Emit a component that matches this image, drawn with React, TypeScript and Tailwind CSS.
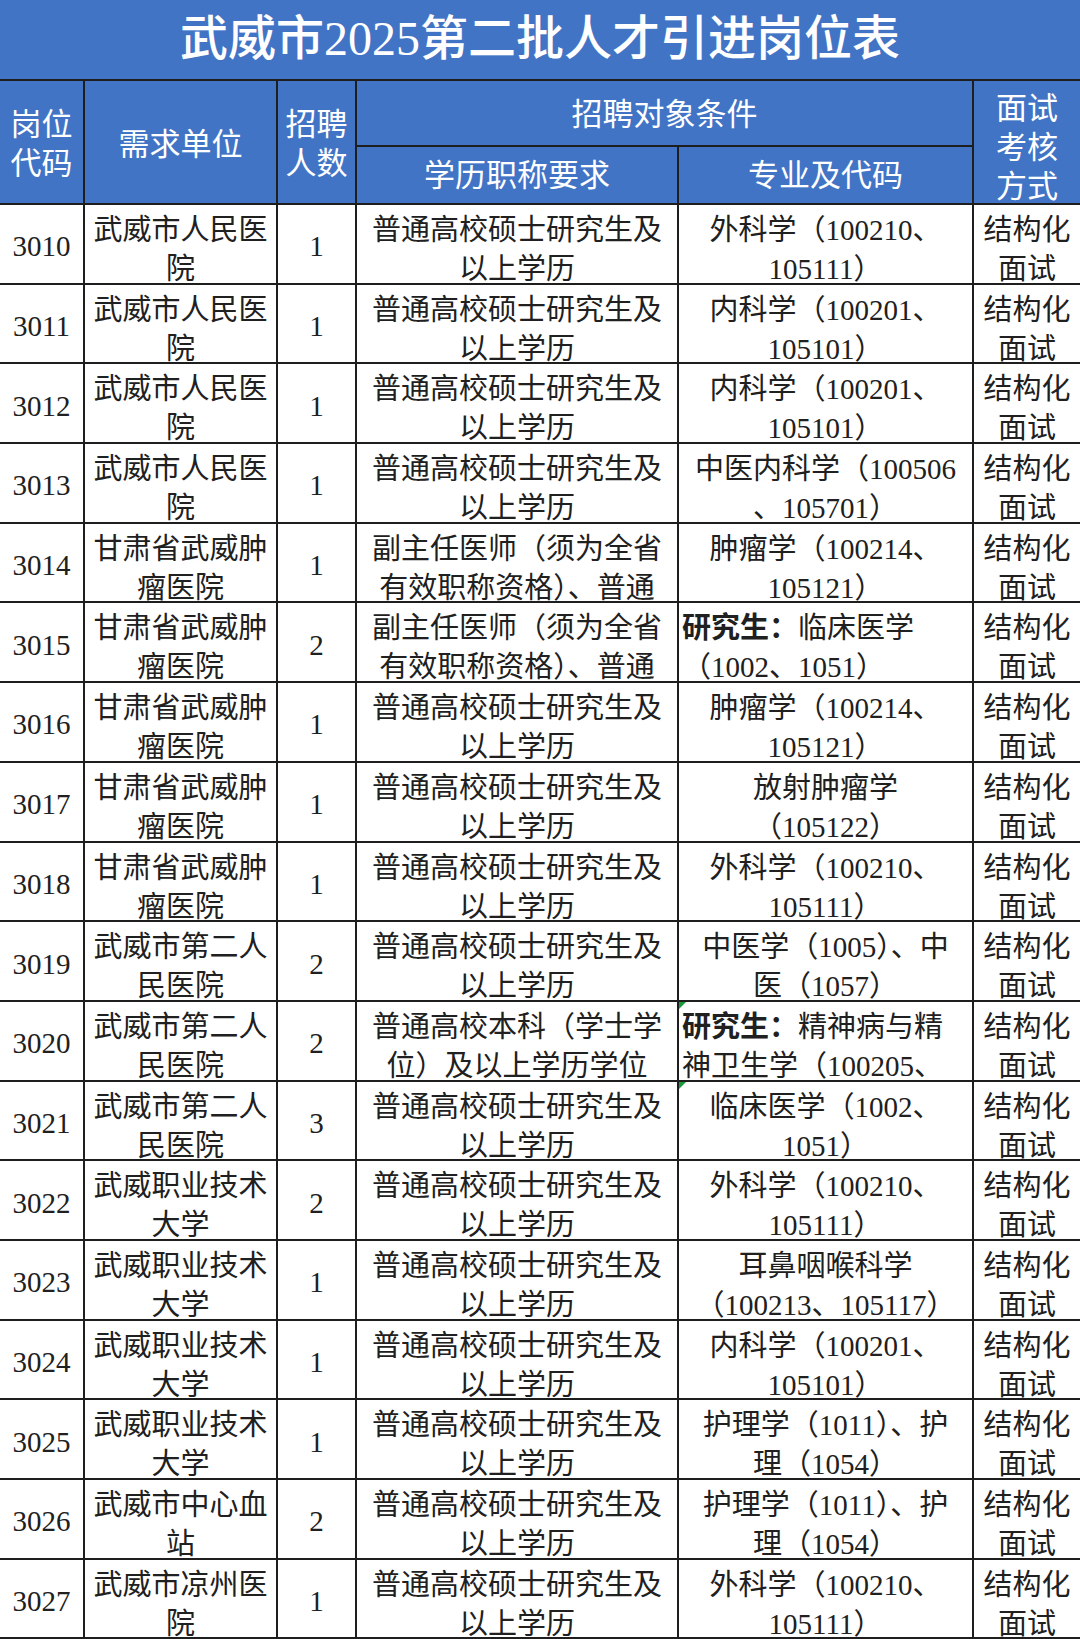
import React from 'react'

type Line = string | { bold: string; rest: string }

interface Row {
  code: string
  unit: string[]
  count: string
  edu: string[]
  major: Line[]
  left?: boolean
  marker?: boolean
}

const rows: Row[] = [
  { code: '3010', unit: ['武威市人民医', '院'], count: '1', edu: ['普通高校硕士研究生及', '以上学历'], major: ['外科学（100210、', '105111）'] },
  { code: '3011', unit: ['武威市人民医', '院'], count: '1', edu: ['普通高校硕士研究生及', '以上学历'], major: ['内科学（100201、', '105101）'] },
  { code: '3012', unit: ['武威市人民医', '院'], count: '1', edu: ['普通高校硕士研究生及', '以上学历'], major: ['内科学（100201、', '105101）'] },
  { code: '3013', unit: ['武威市人民医', '院'], count: '1', edu: ['普通高校硕士研究生及', '以上学历'], major: ['中医内科学（100506', '、105701）'] },
  { code: '3014', unit: ['甘肃省武威肿', '瘤医院'], count: '1', edu: ['副主任医师（须为全省', '有效职称资格）、普通'], major: ['肿瘤学（100214、', '105121）'] },
  {
    code: '3015',
    unit: ['甘肃省武威肿', '瘤医院'],
    count: '2',
    edu: ['副主任医师（须为全省', '有效职称资格）、普通'],
    major: [{ bold: '研究生：', rest: '临床医学' }, '（1002、1051）'],
    left: true
  },
  { code: '3016', unit: ['甘肃省武威肿', '瘤医院'], count: '1', edu: ['普通高校硕士研究生及', '以上学历'], major: ['肿瘤学（100214、', '105121）'] },
  { code: '3017', unit: ['甘肃省武威肿', '瘤医院'], count: '1', edu: ['普通高校硕士研究生及', '以上学历'], major: ['放射肿瘤学', '（105122）'] },
  { code: '3018', unit: ['甘肃省武威肿', '瘤医院'], count: '1', edu: ['普通高校硕士研究生及', '以上学历'], major: ['外科学（100210、', '105111）'] },
  { code: '3019', unit: ['武威市第二人', '民医院'], count: '2', edu: ['普通高校硕士研究生及', '以上学历'], major: ['中医学（1005）、中', '医（1057）'] },
  {
    code: '3020',
    unit: ['武威市第二人', '民医院'],
    count: '2',
    edu: ['普通高校本科（学士学', '位）及以上学历学位'],
    major: [{ bold: '研究生：', rest: '精神病与精' }, '神卫生学（100205、'],
    left: true,
    marker: true
  },
  { code: '3021', unit: ['武威市第二人', '民医院'], count: '3', edu: ['普通高校硕士研究生及', '以上学历'], major: ['临床医学（1002、', '1051）'], marker: true },
  { code: '3022', unit: ['武威职业技术', '大学'], count: '2', edu: ['普通高校硕士研究生及', '以上学历'], major: ['外科学（100210、', '105111）'] },
  { code: '3023', unit: ['武威职业技术', '大学'], count: '1', edu: ['普通高校硕士研究生及', '以上学历'], major: ['耳鼻咽喉科学', '（100213、105117）'] },
  { code: '3024', unit: ['武威职业技术', '大学'], count: '1', edu: ['普通高校硕士研究生及', '以上学历'], major: ['内科学（100201、', '105101）'] },
  { code: '3025', unit: ['武威职业技术', '大学'], count: '1', edu: ['普通高校硕士研究生及', '以上学历'], major: ['护理学（1011）、护', '理（1054）'] },
  { code: '3026', unit: ['武威市中心血', '站'], count: '2', edu: ['普通高校硕士研究生及', '以上学历'], major: ['护理学（1011）、护', '理（1054）'] },
  { code: '3027', unit: ['武威市凉州医', '院'], count: '1', edu: ['普通高校硕士研究生及', '以上学历'], major: ['外科学（100210、', '105111）'] }
]

function Lines({ lines, left = false }: { lines: Line[]; left?: boolean }) {
  return (
    <div className={`flex flex-col pt-[6px] ${left ? 'items-start pl-[3px]' : 'items-center'}`}>
      {lines.map((l, i) =>
        typeof l === 'string' ? (
          <span key={i} className="whitespace-nowrap">{l}</span>
        ) : (
          <span key={i} className="whitespace-nowrap">
            <b className="font-bold">{l.bold}</b>
            {l.rest}
          </span>
        )
      )}
    </div>
  )
}

const cell = 'relative overflow-hidden border-b-2 border-r-2 border-[#1e1e1e]'

export default function App() {
  return (
    <div className="h-[1639px] w-[1080px] overflow-hidden bg-white font-['Liberation_Serif','Noto_Sans_CJK_SC',serif] text-[#202020]">
      {/* title */}
      <div className="flex h-[81px] items-center justify-center border-b-2 border-[#1e1e1e] bg-[#4274c6] pb-[2px] text-[48px] font-medium text-white">
        武威市2025第二批人才引进岗位表
      </div>

      {/* header */}
      <div className="grid grid-cols-[85px_193px_79px_322px_295px_106px] grid-rows-[66px_58px] bg-[#4274c6] text-[31px] leading-[39px] text-white">
        <div className={`${cell} row-span-2 flex flex-col items-center justify-center pt-[4px]`}>
          <span>岗位</span>
          <span>代码</span>
        </div>
        <div className={`${cell} row-span-2 flex items-center justify-center pt-[4px]`}>需求单位</div>
        <div className={`${cell} row-span-2 flex flex-col items-center justify-center pt-[4px]`}>
          <span>招聘</span>
          <span>人数</span>
        </div>
        <div className={`${cell} col-span-2 flex items-center justify-center pt-[2px]`}>招聘对象条件</div>
        <div className="relative row-span-2 flex flex-col items-center justify-center overflow-hidden border-b-2 border-[#1e1e1e] pt-[10px]">
          <span>面试</span>
          <span>考核</span>
          <span>方式</span>
        </div>
        <div className={`${cell} flex items-center justify-center`}>学历职称要求</div>
        <div className={`${cell} flex items-center justify-center`}>专业及代码</div>
      </div>

      {/* body */}
      <div className="grid grid-cols-[85px_193px_79px_322px_295px_106px] auto-rows-[79.7px] text-[29px] leading-[39px]">
        {rows.map(r => (
          <React.Fragment key={r.code}>
            <div className={`${cell} flex items-center justify-center pt-[6px]`}>{r.code}</div>
            <div className={cell}>
              <Lines lines={r.unit} />
            </div>
            <div className={`${cell} flex items-center justify-center pt-[6px]`}>{r.count}</div>
            <div className={cell}>
              <Lines lines={r.edu} />
            </div>
            <div className={cell}>
              {r.marker && (
                <span className="absolute left-0 top-0 h-0 w-0 border-r-[7px] border-t-[7px] border-r-transparent border-t-[#1a9a3a]" />
              )}
              <Lines lines={r.major} left={r.left} />
            </div>
            <div className="relative overflow-hidden border-b-2 border-[#1e1e1e]">
              <Lines lines={['结构化', '面试']} />
            </div>
          </React.Fragment>
        ))}
      </div>
    </div>
  )
}
